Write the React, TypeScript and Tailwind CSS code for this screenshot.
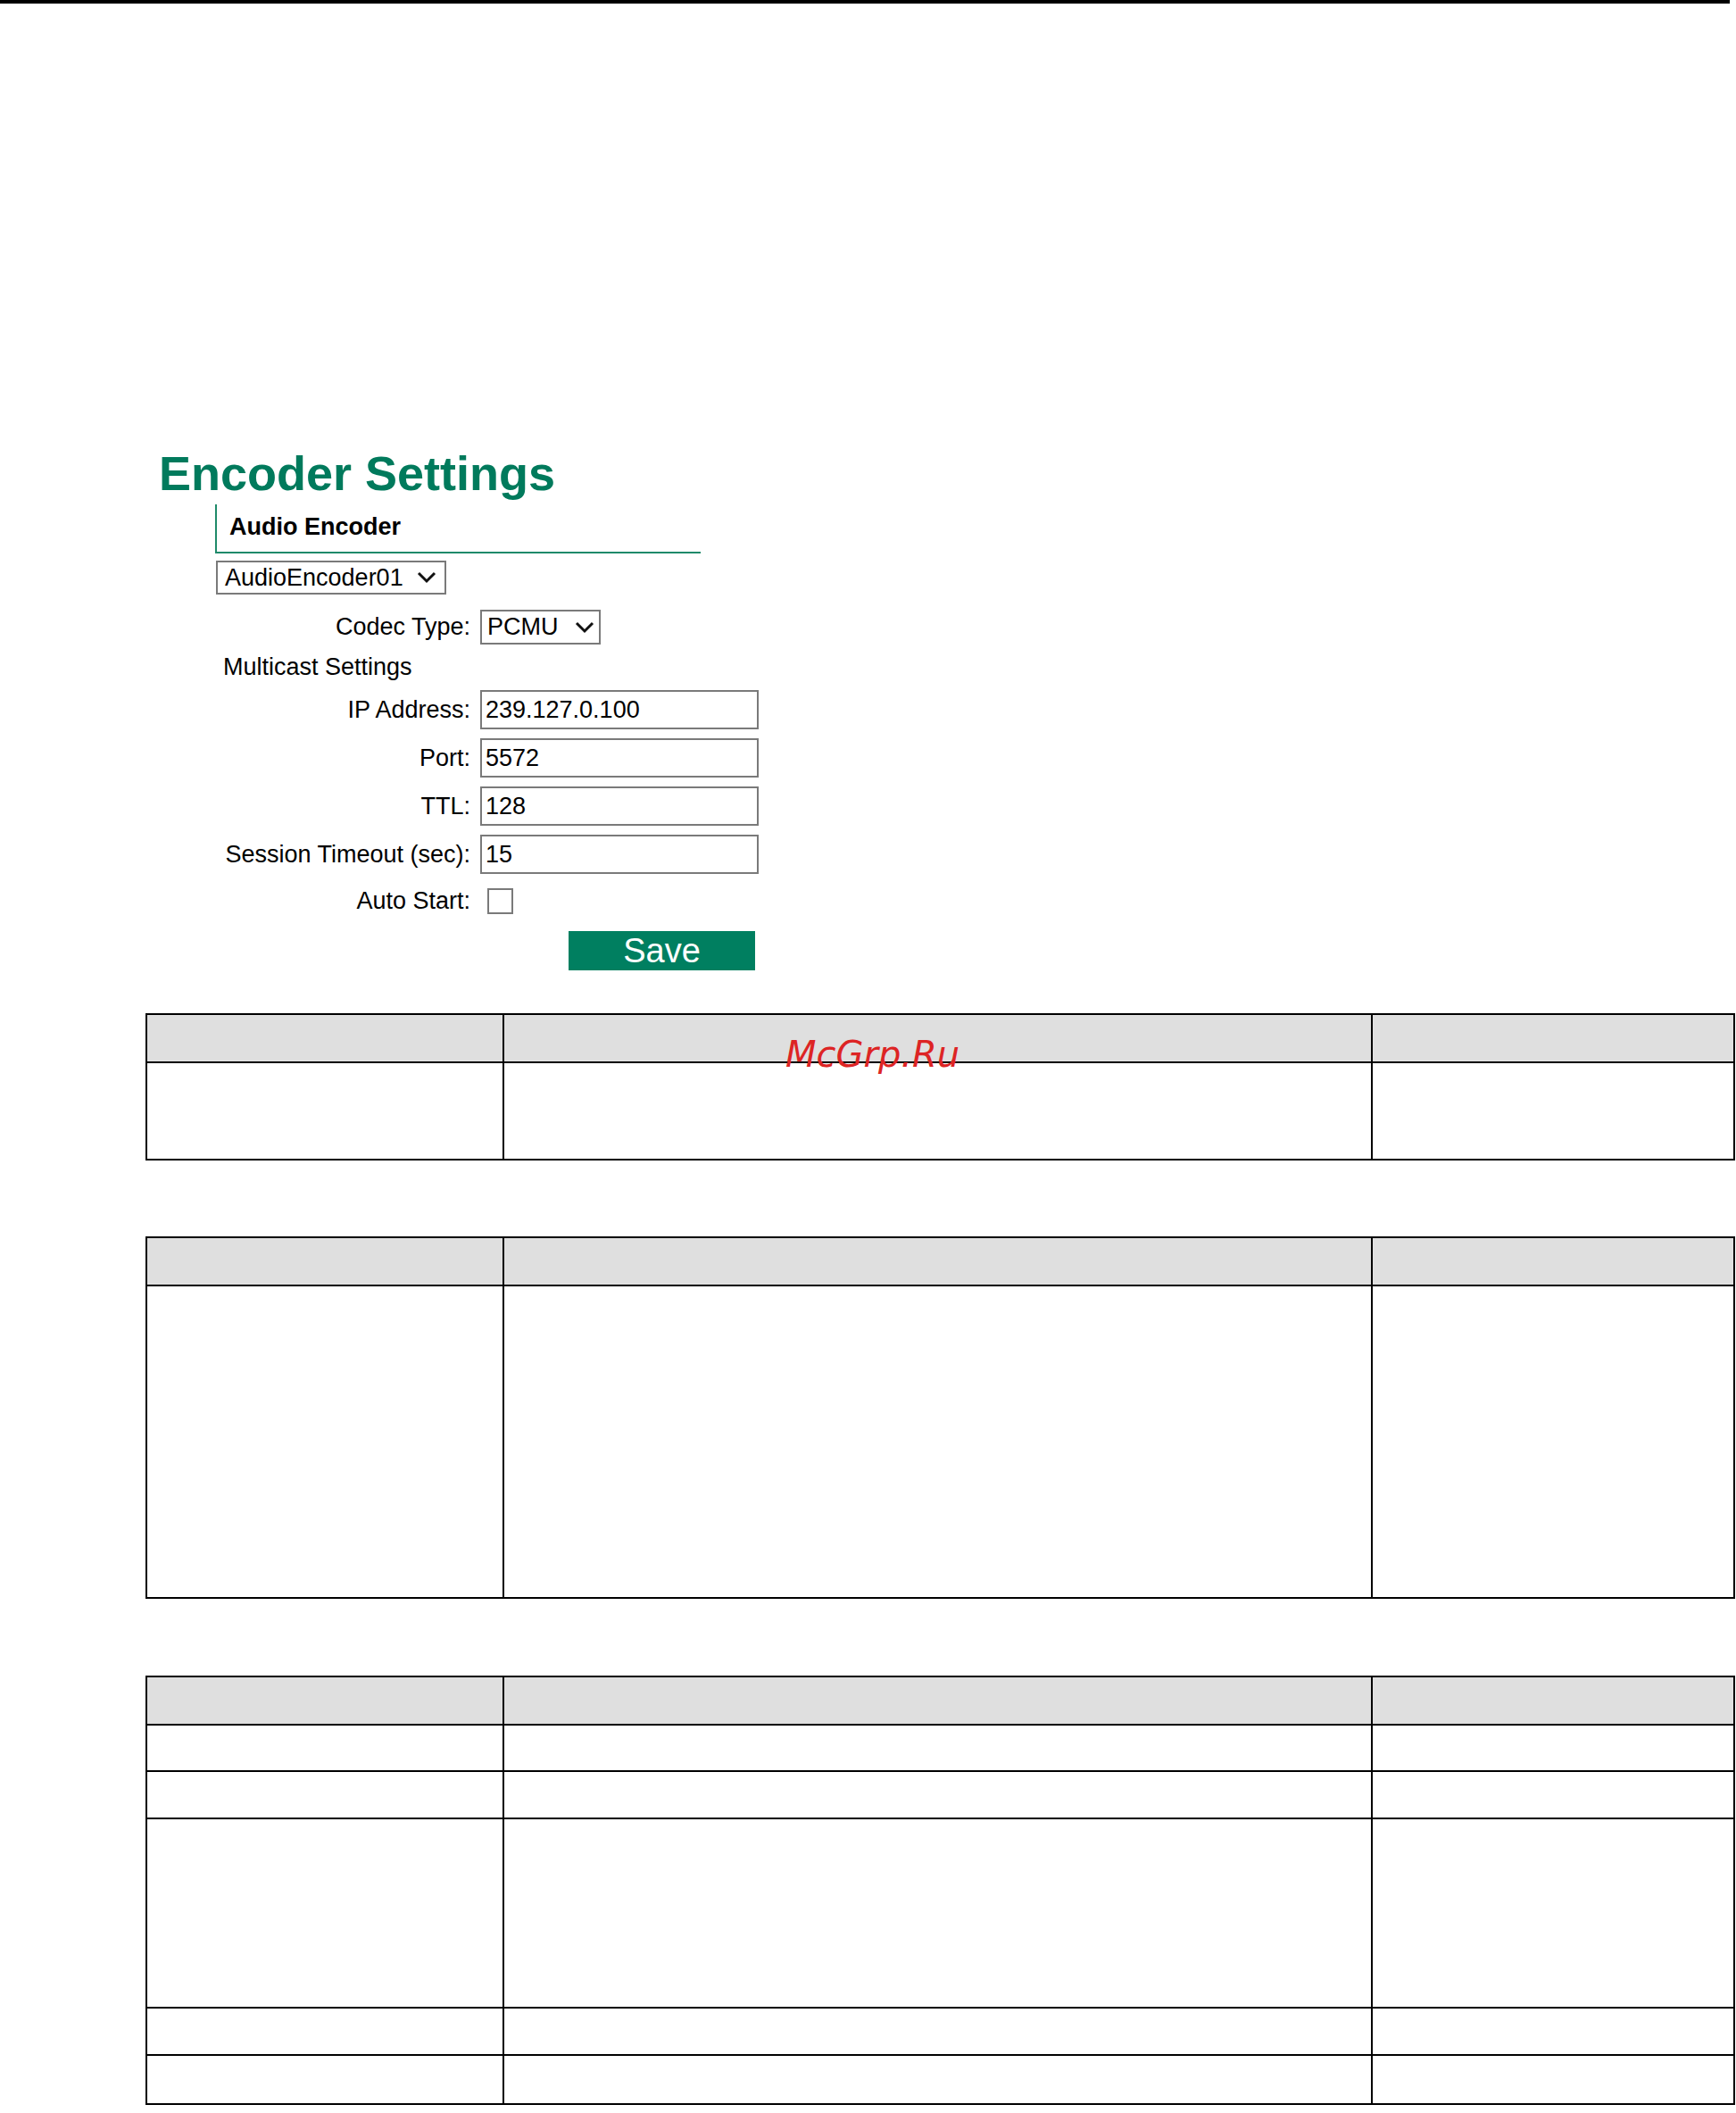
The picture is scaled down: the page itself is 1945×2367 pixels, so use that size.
import React from "react";

function Chevron({ w = 22 }: { w?: number }) {
  return (
    <svg width={w} height={14} viewBox="0 0 22 14" fill="none" className="shrink-0">
      <polyline points="2,2 11,11 20,2" stroke="#111" strokeWidth="3" strokeLinejoin="miter" />
    </svg>
  );
}

function Select({ value, className }: { value: string; className: string }) {
  return (
    <div className={`flex items-center justify-between border-2 border-[#7a7a7a] bg-white ${className}`}>
      <span className="leading-none">{value}</span>
      <Chevron />
    </div>
  );
}

function Field({ label, value }: { label: string; value: string }) {
  return (
    <>
      <div className="flex h-[44px] items-center justify-end">{label}</div>
      <div className="flex h-[44px] w-[312px] items-center border-2 border-[#7a7a7a] bg-white pl-[4px] leading-none">
        {value}
      </div>
    </>
  );
}

function Table({ rows }: { rows: number[] }) {
  return (
    <div className="ml-[163px] w-[1781px] border-2 border-black">
      <div className="grid h-[54px] grid-cols-[400px_973px_1fr] border-b-2 border-black bg-[#dfdfdf]">
        <div className="border-r-2 border-black" />
        <div className="border-r-2 border-black" />
        <div />
      </div>
      {rows.map((h, i) => (
        <div
          key={i}
          className={`grid grid-cols-[400px_973px_1fr] ${i < rows.length - 1 ? "border-b-2 border-black" : ""}`}
          style={{ height: h }}
        >
          <div className="border-r-2 border-black" />
          <div className="border-r-2 border-black" />
          <div />
        </div>
      ))}
    </div>
  );
}

export default function App() {
  return (
    <div className="relative h-[2367px] overflow-hidden bg-white font-['Liberation_Sans',Arial,sans-serif] text-[27px] text-black">
      <div className="h-[4px] w-[1938px] bg-black" />

      <h1 className="mb-[7px] ml-[178px] mt-[498px] text-[54px] font-bold leading-[56px] text-[#007a5c]">Encoder Settings</h1>

      <div className="ml-[241px]">
        <div className="w-[544px] border-b-2 border-l-2 border-[#1f8a6a] pb-[8px] pl-[14px] pt-[5px] text-[27px] font-bold leading-[40px]">
          Audio Encoder
        </div>

        <Select value="AudioEncoder01" className="ml-[1px] mt-[8px] h-[38px] w-[258px] pl-[8px] pr-[9px]" />

        <div className="mt-[17px] grid grid-cols-[286px_auto] gap-x-[11px]">
          <div className="flex h-[39px] items-center justify-end">Codec Type:</div>
          <Select value="PCMU" className="h-[39px] w-[135px] pl-[6px] pr-[5px]" />

          <div className="col-span-2 mt-[5px] flex h-[40px] items-center pl-[9px]">Multicast Settings</div>
        </div>

        <div className="mt-[6px] grid grid-cols-[286px_auto] gap-x-[11px] gap-y-[10px]">
          <Field label="IP Address:" value="239.127.0.100" />
          <Field label="Port:" value="5572" />
          <Field label="TTL:" value="128" />
          <Field label="Session Timeout (sec):" value="15" />

          <div className="flex h-[40px] items-center justify-end">Auto Start:</div>
          <div className="flex h-[40px] items-center pl-[8px]">
            <div className="h-[29px] w-[29px] border-2 border-[#7a7a7a] bg-white" />
          </div>

          <div />
          <div className="mt-[4px] flex">
            <button className="ml-[99px] flex h-[44px] w-[209px] items-center justify-center bg-[#007f60] text-[38px] leading-none text-white">
              Save
            </button>
          </div>
        </div>
      </div>

      <div className="mt-[48px]">
        <Table rows={[107]} />
      </div>
      <div className="mt-[85px]">
        <Table rows={[348]} />
      </div>
      <div className="mt-[86px]">
        <Table rows={[52, 53, 212, 53, 53]} />
      </div>

      <div className="absolute left-[880px] top-[1161px] font-['DejaVu_Sans',sans-serif] text-[40px] italic leading-none text-[#dd2424]">
        McGrp.Ru
      </div>
    </div>
  );
}
